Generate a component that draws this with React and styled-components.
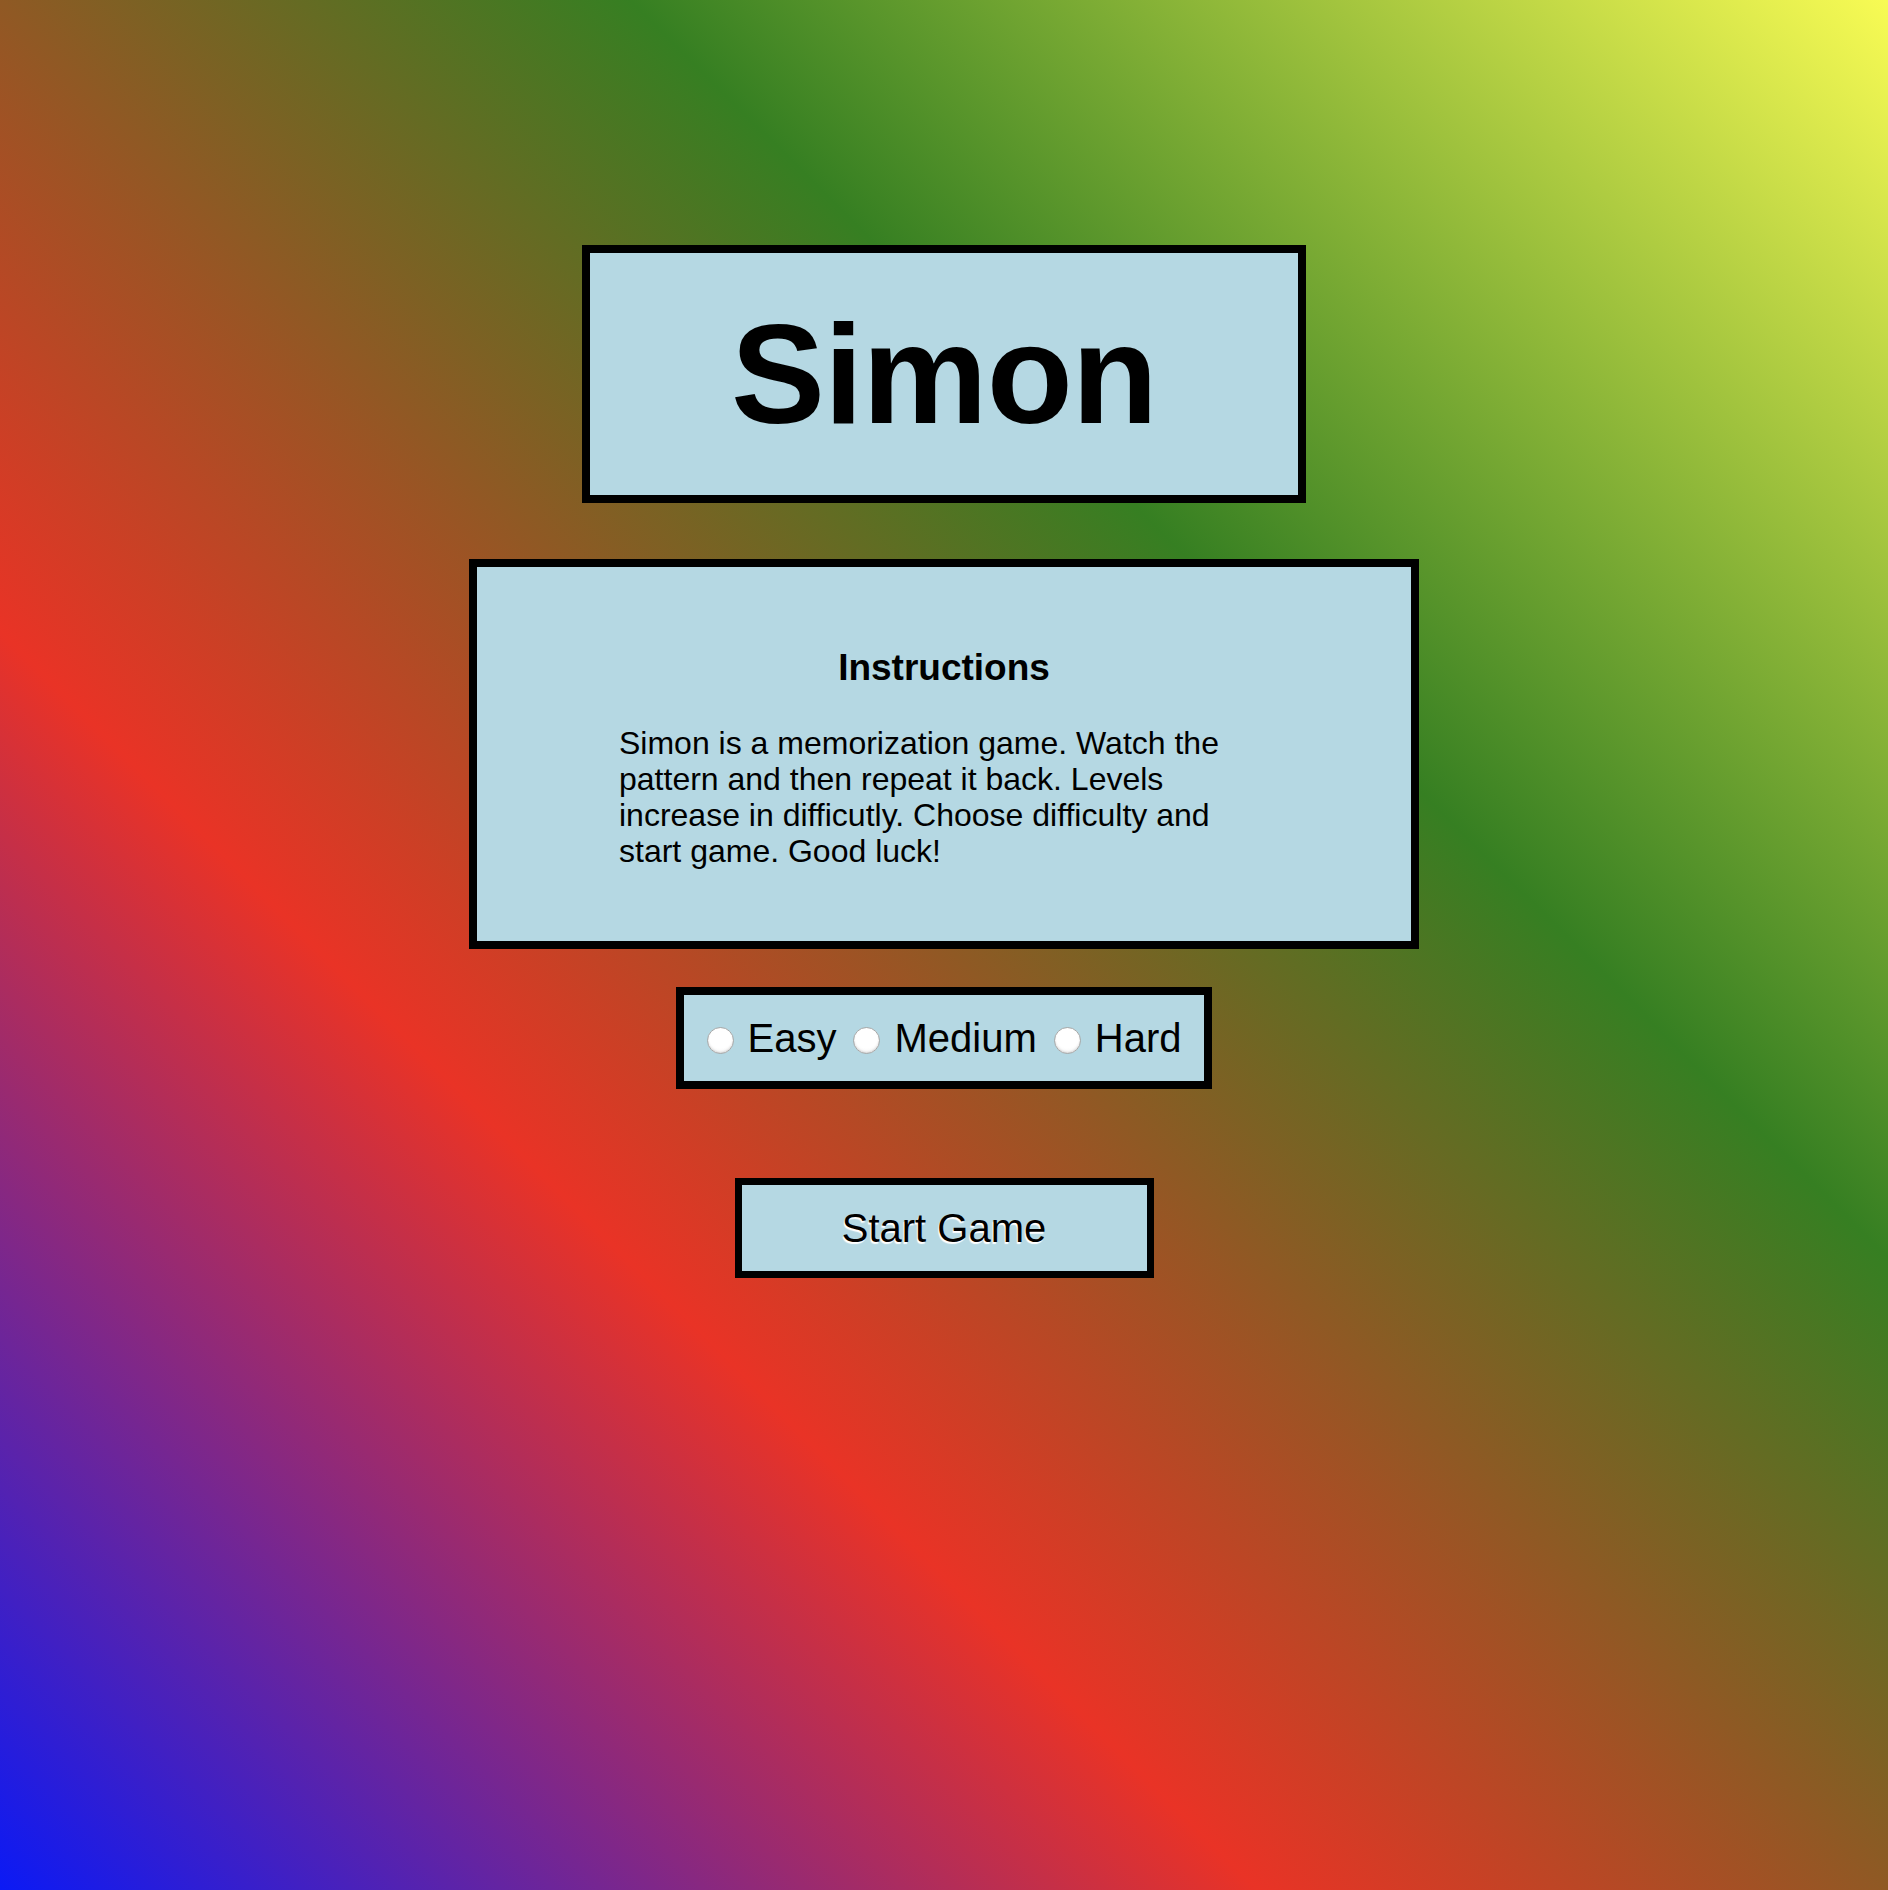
import React, { useState } from 'react'
import styled, { createGlobalStyle } from 'styled-components'

const GlobalStyle = createGlobalStyle`
  html,
  body {
    margin: 0;
    padding: 0;
  }
  body {
    font-family: 'Liberation Sans', Arial, Helvetica, sans-serif;
    color: #000;
  }
`

const Page = styled.div`
  min-height: 100vh;
  box-sizing: border-box;
  padding-top: 245px;
  display: flex;
  flex-direction: column;
  align-items: center;
  background: linear-gradient(
    to top right,
    #0b1af5 0%,
    #e93326 33.3%,
    #367f22 66.7%,
    #f8fb54 100%
  );
`

const Panel = styled.div`
  box-sizing: border-box;
  background: #b5d8e3;
  border: 8px solid #000;
`

const TitleBox = styled(Panel)`
  width: 724px;
  height: 258px;
  display: flex;
  align-items: center;
  justify-content: center;
  h1 {
    margin: 0;
    font-size: 141px;
    font-weight: 700;
    letter-spacing: -1px;
  }
`

const Instructions = styled(Panel)`
  width: 950px;
  margin-top: 56px;
  padding: 80px 0 72px;
  h2 {
    margin: 0 0 36px;
    text-align: center;
    font-size: 37px;
    font-weight: 700;
  }
  p {
    width: 650px;
    margin: 0 auto;
    font-size: 32px;
    line-height: 36px;
  }
`

const Difficulty = styled(Panel)`
  width: 536px;
  height: 102px;
  margin-top: 38px;
  display: flex;
  align-items: center;
  justify-content: center;
  gap: 17px;
`

const Option = styled.label`
  display: flex;
  align-items: center;
  gap: 14px;
  font-size: 40px;
  cursor: pointer;
`

const Radio = styled.input.attrs({ type: 'radio' })`
  appearance: none;
  width: 27px;
  height: 27px;
  margin: 5px 0 0;
  border-radius: 50%;
  border: 1px solid #a8a8a8;
  background: radial-gradient(circle at 50% 35%, #fff 55%, #ececec 100%);
  box-shadow: inset 0 -1px 2px rgba(0, 0, 0, 0.12);
  box-sizing: border-box;
  cursor: pointer;
  &:checked {
    background: radial-gradient(circle, #222 0 30%, #fff 36%);
  }
`

const StartButton = styled.button`
  box-sizing: border-box;
  width: 419px;
  height: 100px;
  margin-top: 89px;
  border: 7px solid #000;
  background: #b5d8e3;
  font-family: inherit;
  font-size: 40px;
  color: #000;
  text-shadow: -1px 2px 1px #fff;
  cursor: pointer;
  padding: 0;
`

const levels = ['Easy', 'Medium', 'Hard']

const App = () => {
  const [level, setLevel] = useState(null)

  return (
    <Page>
      <GlobalStyle />
      <TitleBox>
        <h1>Simon</h1>
      </TitleBox>
      <Instructions>
        <h2>Instructions</h2>
        <p>
          Simon is a memorization game. Watch the pattern and then repeat it
          back. Levels increase in difficutly. Choose difficulty and start
          game. Good luck!
        </p>
      </Instructions>
      <Difficulty>
        {levels.map((name) => (
          <Option key={name}>
            <Radio
              name="difficulty"
              checked={level === name}
              onChange={() => setLevel(name)}
            />
            {name}
          </Option>
        ))}
      </Difficulty>
      <StartButton>Start Game</StartButton>
    </Page>
  )
}

export default App
